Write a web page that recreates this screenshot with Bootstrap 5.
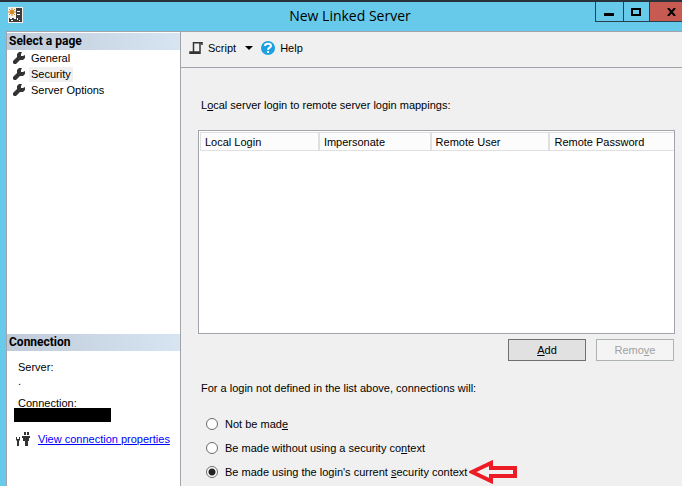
<!DOCTYPE html>
<html lang="en">
<head>
<meta charset="utf-8">
<meta name="viewport" content="width=device-width, initial-scale=1">
<title>New Linked Server</title>
<link href="https://cdn.jsdelivr.net/npm/bootstrap@5.3.0/dist/css/bootstrap.min.css" rel="stylesheet">
<style>
  body { font: 11px/16px "Liberation Sans", Arial, sans-serif; color: #000; background: #67caea; }
  svg { display: block; flex: none; }
  .title-bar { height: 31px; border-top: 2px solid #29323a; }
  .title-bar h1 { font: 14px/28px "Open Sans", "Segoe UI", sans-serif; }
  .app-icon { margin: 5px 0 0 8px; width: 97px; }
  .win-btn { height: 20px; width: 28px; border: 1px solid #26404d; border-width: 0 0 1px 1px; background: none; padding: 0; display: flex; align-items: center; justify-content: center; }
  .win-max { width: 26px; }
  .win-close { background: #c75b52; width: 33px; padding-left: 12px; }
  .win-body { margin-left: 6px; border: 1px solid #a3a3ab; border-width: 1px 0 0 1px; }
  .side { width: 174px; flex: none; border-right: 1px solid #a3a3ab; background: #fff; padding-top: 1px; }
  .side h2 { font: 700 12px/17px Roboto, "Liberation Sans", sans-serif; padding-left: 2px; margin: 0; background: linear-gradient(90deg, #bfcbd9, #d7e4f2); }
  .side .pages { padding: 0 0 0 6px; }
  .pages a { color: #000; text-decoration: none; display: flex; align-items: center; gap: 4px; height: 16px; }
  .pages span { padding: 0 2px; line-height: 15px; }
  .pages .current span { background: #f0f0f0; }
  .conn { height: 152px; }
  .conn-info { padding: 8px 7px 0; }
  .conn-info dt, .conn-info dd { font-weight: 400; margin: 0; padding-left: 4px; }
  .conn-info dd { line-height: 12px; margin-bottom: 8px; }
  .conn-info .hidden-name { height: 14px; width: 97px; background: #000; margin: -3px 0 9px; }
  .conn-link { padding-left: 2px; }
  .conn-info a { color: #00f; text-decoration: underline; }
  .main-pane { background: #f0f0f0; min-width: 0; }
  .tools { height: 36px; border-bottom: 1px solid #a3a3ab; padding: 0 8px 4px; }
  .tool-btn { border: 0; background: none; padding: 0; color: #000; display: flex; align-items: center; gap: 5px; }
  .pane-form { padding: 29px 7px 2px 17px; }
  .pane-form .caption { padding-left: 3px; margin: 0; }
  .map-grid { margin-top: 17px; border: 1px solid #a3a3ab; background: #fff; padding: 1px 0 0 1px; }
  .map-grid table { width: 100%; table-layout: fixed; }
  .map-grid th { font-weight: 400; background: #fcfcfc; border: 1px solid #e0e0e0; border-right-width: 0; height: 18px; padding: 0 0 0 4px; line-height: 16px; }
  .map-grid th + th { border-left-width: 2px; }
  .form-btns { gap: 10px; margin: 5px 1px 19px 0; }
  .box-btn { width: 78px; height: 22px; padding: 0; border: 1px solid #707070; background: #e1e1e1; color: #000; }
  .box-btn:disabled { background: #f4f4f4; border-color: #adb2b5; color: #a0a0a0; }
  .choices { margin: 16px 0 0; padding: 0 0 0 8px; }
  .opt { display: flex; align-items: center; height: 24px; }
  .opt input { appearance: none; width: 12px; height: 12px; border: 1px solid #6b6b6b; border-radius: 50%; background: #fff; margin: 0 7px 0 0; flex: none; }
  .opt input:checked { background: radial-gradient(circle, #222 0 3px, #fff 4px); }
  .arrow-mark { margin: 0 0 0 2px; }
</style>
<script src="https://cdn.jsdelivr.net/npm/bootstrap@5.3.0/dist/js/bootstrap.bundle.min.js"></script>
</head>
<body>
<svg class="d-none" aria-hidden="true">
  <symbol id="wrench" viewBox="0 0 12 12"><path fill="#333" d="M6 0h3L8 2v2h2l2-1v3l-2 2H7l-4 4H1L0 11V9l4-4V2z"/></symbol>
</svg>
<div class="d-flex flex-column vh-100 overflow-hidden">
  <header class="title-bar d-flex justify-content-between">
    <div class="app-icon">
      <svg width="16" height="16" viewBox="0 0 16 16"><path fill="#f4f0ea" d="M0 0h15v16H0z"/><path fill="#3c3c3c" d="M8 1h6v14H1v-4h7z"/><path stroke="#d18a24" d="M4 1v8M0 5h8M1 2l6 6M7 2L1 8"/><circle cx="4" cy="5" r="2" fill="#d18a24"/><path fill="#fff" d="M9 4h3v1H9zM9 7h3v1H9zM2 11h2v1H2zM6 11h2v1H6zM9 11h1v2H9zM3 13h2v1H3zM11 13h1v1h-1z"/></svg>
    </div>
    <h1 class="m-0">New Linked Server</h1>
    <div class="d-flex">
      <button class="win-btn" type="button" aria-label="Minimize"><svg width="10" height="10"><path d="M0 6h10v3H0z"/></svg></button>
      <button class="win-btn win-max" type="button" aria-label="Maximize"><svg width="10" height="8"><path fill="none" stroke="#000" stroke-width="2" d="M1 1h8v6H1z"/></svg></button>
      <button class="win-btn win-close" type="button" aria-label="Close"><svg width="9" height="8" viewBox="0 0 9 8"><path stroke="#000" stroke-width="2" d="M1 0l7 8M8 0L1 8"/></svg></button>
    </div>
  </header>
  <div class="win-body d-flex flex-grow-1">
    <aside class="side d-flex flex-column">
      <nav class="flex-grow-1" aria-label="Pages">
        <h2>Select a page</h2>
        <ul class="pages list-unstyled m-0">
          <li><a href="#"><svg width="12" height="12"><use href="#wrench"/></svg><span>General</span></a></li>
          <li><a href="#" class="current" aria-current="page"><svg width="12" height="12"><use href="#wrench"/></svg><span>Security</span></a></li>
          <li><a href="#"><svg width="12" height="12"><use href="#wrench"/></svg><span>Server Options</span></a></li>
        </ul>
      </nav>
      <section class="conn">
        <h2>Connection</h2>
        <div class="conn-info">
          <dl class="m-0"><dt>Server:</dt><dd>.</dd><dt>Connection:</dt><dd class="hidden-name"></dd></dl>
          <div class="conn-link d-flex align-items-center gap-2">
            <svg width="14" height="14" viewBox="0 0 14 14"><path fill="#333" d="M0 5h1v2h2V5h1v3L3 9v5H1V9L0 8zM8 0h2v3H8zM11 0h2v3h-2zM6 4h8v2h-1v3h-1v5H9V9H7V6H6z"/></svg>
            <a href="#">View connection properties</a>
          </div>
        </div>
      </section>
    </aside>
    <main class="main-pane d-flex flex-column flex-grow-1">
      <div class="tools d-flex align-items-center flex-shrink-0">
        <button class="tool-btn" type="button"><svg width="14" height="14" viewBox="0 0 14 14"><path fill="none" stroke="#333" stroke-width="1.5" d="M13 4V1.700H4.500v9M11 2v10.300H1V11h8.500v1"/></svg>Script<svg class="ms-1" width="8" height="4"><path d="M0 0h8L4 4z"/></svg></button>
        <button class="tool-btn ms-2" type="button"><svg width="14" height="14" viewBox="0 0 14 14"><circle cx="7" cy="7" r="7" fill="#1ba1e2"/><path fill="none" stroke="#fff" stroke-width="2" d="M4 5c0-3 6-3 6 0 0 2-3 1-3 4M7 10v2"/></svg>Help</button>
      </div>
      <form class="pane-form d-flex flex-column flex-grow-1">
        <p class="caption">L<u>o</u>cal server login to remote server login mappings:</p>
        <div class="map-grid flex-grow-1">
          <table>
            <colgroup><col style="width:25%"><col style="width:23.6%"><col style="width:25.1%"><col></colgroup>
            <thead><tr><th scope="col">Local Login</th><th scope="col">Impersonate</th><th scope="col">Remote User</th><th scope="col">Remote Password</th></tr></thead>
          </table>
        </div>
        <div class="form-btns d-flex justify-content-end">
          <button class="box-btn" type="button"><u>A</u>dd</button>
          <button class="box-btn" type="button" disabled>Remo<u>v</u>e</button>
        </div>
        <p class="caption" id="choice-caption">For a login not defined in the list above, connections will:</p>
        <div class="choices" role="radiogroup" aria-labelledby="choice-caption">
          <label class="opt"><input type="radio" name="ctx"><span>Not be mad<u>e</u></span></label>
          <label class="opt"><input type="radio" name="ctx"><span>Be made without using a security co<u>n</u>text</span></label>
          <label class="opt"><input type="radio" name="ctx" checked><span>Be made using the login's current <u>s</u>ecurity context</span>
            <svg class="arrow-mark" width="48" height="24" viewBox="0 0 48 24"><path fill="#f0f0f0" stroke="#ed1c24" stroke-width="4" d="M3 12l19-9v5h24v8H22v5z"/></svg></label>
        </div>
      </form>
    </main>
  </div>
</div>
</body>
</html>
